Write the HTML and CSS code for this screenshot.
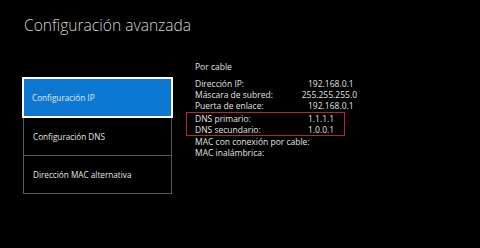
FILE: index.html
```html
<!DOCTYPE html>
<html lang="es">
<head>
    <meta charset="UTF-8">
    <title>Configuración avanzada</title>
    <link rel="stylesheet" href="styles.css">
</head>
<body>
    <h1 class="titulo">Configuración avanzada</h1>

    <div class="contenido">
        <div class="menu">
            <div class="opcion activa">Configuración IP</div>
            <div class="opcion">Configuración DNS</div>
            <div class="opcion">Dirección MAC alternativa</div>
        </div>

        <div class="detalles">
            <p class="tipo">Por cable</p>
            <div class="fila"><span>Dirección IP:</span><span>192.168.0.1</span></div>
            <div class="fila"><span>Máscara de subred:</span><span>255.255.255.0</span></div>
            <div class="fila"><span>Puerta de enlace:</span><span>192.168.0.1</span></div>
            <div class="marcado">
                <div class="fila"><span>DNS primario:</span><span>1.1.1.1</span></div>
                <div class="fila"><span>DNS secundario:</span><span>1.0.0.1</span></div>
            </div>
            <div class="fila"><span>MAC con conexión por cable:</span><span></span></div>
            <div class="fila"><span>MAC inalámbrica:</span><span></span></div>
        </div>
    </div>
</body>
</html>
```

FILE: styles.css
```css
body {
    margin: 0;
    background: #000000;
    color: #e2e2e2;
    font-family: 'Open Sans', 'Noto Sans', sans-serif;
    height: 248px;
    overflow: hidden;
}
.titulo {
    margin: 0;
    padding: 14px 0 0 24px;
    font-size: 15.6px;
    font-weight: 300;
    color: #d4d4d4;
    line-height: 22px;
}
.contenido {
    display: flex;
    padding: 20px 0 0 22px;
}
.menu {
    width: 151px;
    margin-top: 21px;
}
.opcion {
    height: 37px;
    display: flex;
    align-items: center;
    padding-left: 9px;
    margin-left: 1px;
    margin-right: 1px;
    border: 1px solid #5a5a5a;
    border-top: none;
    font-size: 8.2px;
    color: #e6e6e6;
    white-space: nowrap;
}
.opcion.activa {
    height: 37px;
    margin: 0;
    padding-left: 8px;
    background: #0c78d2;
    border: 2px solid #ffffff;
}
.detalles {
    margin-left: 22px;
    padding-top: 5px;
    width: 162px;
    font-size: 8.5px;
}
.tipo {
    margin: 0 0 6px 0;
    line-height: 11px;
}
.fila {
    display: flex;
    line-height: 11px;
    white-space: nowrap;
}
.fila span:first-child {
    width: 113px;
}
.marcado {
    border: 1px solid #b3262e;
    margin: 1px 0 0 -9px;
    padding: 0 0 0 8px;
    width: 149px;
}
```
